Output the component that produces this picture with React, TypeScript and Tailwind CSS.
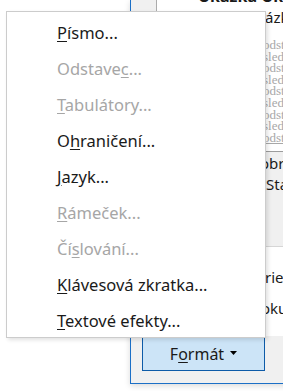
import React from "react";

const font = { fontFamily: '"Noto Sans", "Open Sans", sans-serif' };

type Item = { pre: string; key: string; post: string; disabled?: boolean };

const items: Item[] = [
  { pre: "", key: "P", post: "ísmo..." },
  { pre: "Odstave", key: "c", post: "...", disabled: true },
  { pre: "", key: "T", post: "abulátory...", disabled: true },
  { pre: "O", key: "h", post: "raničení..." },
  { pre: "", key: "J", post: "azyk..." },
  { pre: "", key: "R", post: "ámeček...", disabled: true },
  { pre: "Čí", key: "s", post: "lování...", disabled: true },
  { pre: "", key: "K", post: "lávesová zkratka..." },
  { pre: "", key: "T", post: "extové efekty..." },
];

const previewLines = [
  "odstavec",
  "sledující",
  "odstavec",
  "sledující",
  "odstavec",
  "sledující",
  "odstavec",
  "sledující",
  "odstavec",
];

export default function App() {
  return (
    <div className="relative w-[283px] h-[391px] bg-white overflow-hidden" style={font}>
      {/* background dialog window */}
      <div className="absolute left-[130px] top-0 w-[160px] h-[384px] bg-[#f0f0f0] border-l border-b border-[#1b6fc6] shadow-[0_2px_6px_rgba(0,0,0,0.15)] flex flex-col">
        {/* preview section */}
        <div className="h-[152px] flex border-b border-[#9c9c9c]">
          <div className="w-[26px] bg-[#f0f0f0] border-r border-[#ababab]" />
          <div className="flex-1 bg-white relative overflow-hidden">
            <div className="absolute left-[41px] top-[-16px] whitespace-nowrap text-[16px] font-bold text-[#1a1a1a]">
              Ukázka Ukázka
            </div>
            <div className="pl-[108px] pt-[7px] whitespace-nowrap text-[15px] leading-[20px] text-[#1a1a1a]">
              ázka
            </div>
            <div
              className="pl-[106px] pt-[12px] flex flex-col text-[13px] leading-[11.6px] text-[#a8a8a8]"
              style={{ fontFamily: '"Liberation Serif", serif' }}
            >
              {previewLines.map((l, i) => (
                <div key={i} className={"whitespace-nowrap" + (i === previewLines.length - 1 ? " underline" : "")}>
                  {l}
                </div>
              ))}
            </div>
          </div>
        </div>
        {/* description */}
        <div className="h-[95px] bg-[#f0f0f0] border-b border-[#d6d6d6] pt-[1px] text-[15px] leading-[21px] text-[#1a1a1a] whitespace-nowrap">
          <div className="pl-[129px]">obrazovku</div>
          <div className="pl-[135px]">Standardní</div>
        </div>
        {/* options */}
        <div className="h-[89px] bg-white pt-[15px] text-[15px] leading-[31px] text-[#1a1a1a] whitespace-nowrap">
          <div className="pl-[134px]">rie stylů</div>
          <div className="pl-[130px]">okumentu</div>
        </div>
        {/* bottom buttons */}
        <div className="flex-1 pl-[11px] pt-[1px]">
          <div className="w-[123px] h-[34px] bg-[#cce4f7] border border-[#0d5ba8] flex items-center justify-center gap-[6px] text-[16px] text-[#1a1a1a]">
            <span>
              F<span className="underline underline-offset-[2px]">o</span>rmát
            </span>
            <svg width="7" height="4" viewBox="0 0 7 4" className="mt-[-3px]">
              <path d="M0 0 H7 L3.5 4 Z" fill="#000" />
            </svg>
          </div>
        </div>
      </div>

      {/* context menu */}
      <div className="absolute left-[6px] top-[11px] w-[260px] h-[327px] bg-white border border-[#cccccc] shadow-[2px_2px_4px_rgba(0,0,0,0.12)] flex flex-col pt-[3px] overflow-hidden">
        {items.map((it, i) => (
          <div
            key={i}
            className={
              "h-[36px] shrink-0 flex items-center pl-[50px] text-[16.5px] whitespace-nowrap " +
              (it.disabled ? "text-[#a6a6a6]" : "text-[#1a1a1a]")
            }
          >
            <span>
              {it.pre}
              <span className="underline underline-offset-[2px]">{it.key}</span>
              {it.post}
            </span>
          </div>
        ))}
      </div>
    </div>
  );
}
